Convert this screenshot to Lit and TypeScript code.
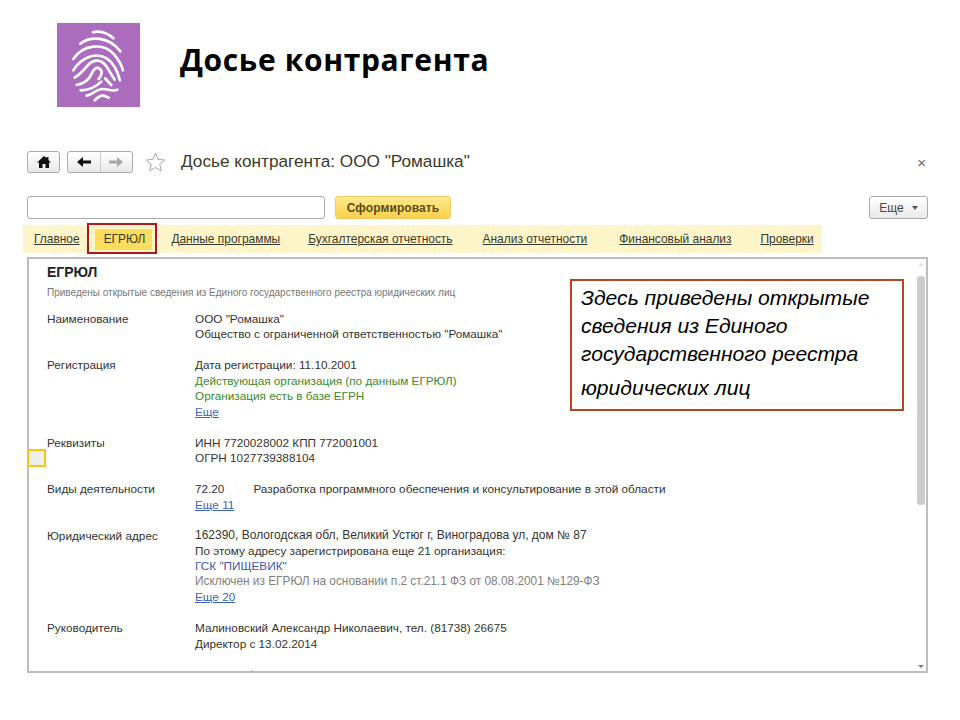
import { LitElement, html, css, svg } from 'lit';
import { customElement } from 'lit/decorators.js';

const fingerprint = svg`
  <g fill="none" stroke="#fff" stroke-width="8" stroke-linecap="round" stroke-linejoin="round">
    <path d="M159 66c20-6 44 2 61 18" />
    <path d="M121 100c30-24 86-22 120 23" />
    <path d="M100 146c30-44 90-50 122-14 14 16 22 30 27 48" />
    <path d="M100 180c24-38 66-56 100-36 22 14 32 36 40 66" />
    <path d="M104 202c18-10 30-26 42-40 16-16 36-14 50 2 12 16 16 26 28 44" />
    <path d="M110 224c22-4 36-12 44-32 6-16 16-24 26-16 10 8 2 24-4 30" />
    <path d="M122 240c24 0 46-10 62-26" />
    <path d="M196 204c6 8 12 14 18 20" />
    <path d="M140 256c18-2 28-20 48-20 18 0 26 8 44 2" />
    <path d="M164 270c8-8 16-14 24-14 8 0 12 4 18 6" />
  </g>
`;

interface Row {
  label: string;
  lines: { text: string; kind?: string }[];
}

const rows: Row[] = [
  {
    label: 'Наименование',
    lines: [{ text: 'ООО "Ромашка"' }, { text: 'Общество с ограниченной ответственностью "Ромашка"' }],
  },
  {
    label: 'Регистрация',
    lines: [
      { text: 'Дата регистрации: 11.10.2001' },
      { text: 'Действующая организация (по данным ЕГРЮЛ)', kind: 'green' },
      { text: 'Организация есть в базе ЕГРН', kind: 'green' },
      { text: 'Еще', kind: 'link' },
    ],
  },
  {
    label: 'Реквизиты',
    lines: [{ text: 'ИНН 7720028002 КПП 772001001' }, { text: 'ОГРН 1027739388104' }],
  },
  {
    label: 'Виды деятельности',
    lines: [
      { text: '72.20', kind: 'okved' },
      { text: 'Еще 11', kind: 'link' },
    ],
  },
  {
    label: 'Юридический адрес',
    lines: [
      { text: '162390, Вологодская обл, Великий Устюг г, Виноградова ул, дом № 87', kind: 'wide' },
      { text: 'По этому адресу зарегистрирована еще 21 организация:' },
      { text: 'ГСК "ПИЩЕВИК"', kind: 'blue' },
      { text: 'Исключен из ЕГРЮЛ на основании п.2 ст.21.1 ФЗ от 08.08.2001 №129-ФЗ', kind: 'grey' },
      { text: 'Еще 20', kind: 'link' },
    ],
  },
  {
    label: 'Руководитель',
    lines: [{ text: 'Малиновский Александр Николаевич, тел. (81738) 26675' }, { text: 'Директор с 13.02.2014' }],
  },
  {
    label: 'Уставный капитал',
    lines: [{ text: '15 000 руб.' }],
  },
];

const tabs = ['Главное', 'ЕГРЮЛ', 'Данные программы', 'Бухгалтерская отчетность', 'Анализ отчетности', 'Финансовый анализ', 'Проверки'];

@customElement('app-root')
export class AppRoot extends LitElement {
  static styles = css`
    :host {
      display: block;
      width: 960px;
      height: 720px;
      overflow: hidden;
      background: #fff;
      font-family: 'Liberation Sans', Arial, sans-serif;
      color: #333;
    }

    .page {
      padding-top: 23px;
    }

    .head {
      display: flex;
      align-items: center;
      gap: 40px;
      margin-left: 57px;
      height: 84px;
    }

    .logo {
      display: block;
      width: 83px;
      height: 84px;
    }

    h1 {
      margin: -12px 0 0;
      font-family: 'Open Sans', sans-serif;
      font-size: 30px;
      font-weight: 700;
      letter-spacing: 0.65px;
      color: #000;
    }

    .window {
      margin-top: 44px;
      padding: 0 32px 0 27px;
    }

    .toolbar {
      display: flex;
      align-items: center;
      height: 22px;
    }

    .btn {
      display: flex;
      align-items: center;
      justify-content: center;
      box-sizing: border-box;
      border: 1px solid #aaa;
      border-radius: 3px;
      background: linear-gradient(#fff, #e9e9e9);
    }

    .home {
      width: 33px;
      height: 22px;
    }

    .history {
      display: flex;
      width: 66px;
      height: 22px;
      margin-left: 7px;
      box-sizing: border-box;
      border: 1px solid #aaa;
      border-radius: 3px;
      background: linear-gradient(#fff, #e9e9e9);
    }

    .history span {
      display: flex;
      flex: 1;
      align-items: center;
      justify-content: center;
    }

    .history span + span {
      border-left: 1px solid #ccc;
    }

    .star {
      margin-left: 12px;
    }

    .doc-title {
      margin: -2px 0 0 15px;
      font-size: 17.2px;
      color: #3a3a2a;
    }

    .close {
      margin-left: auto;
      margin-right: 2px;
      font-size: 15px;
      color: #666;
    }

    .form {
      display: flex;
      gap: 10px;
      margin-top: 23px;
      height: 23px;
    }

    .search {
      box-sizing: border-box;
      width: 298px;
      border: 1px solid #aaa;
      border-radius: 3px;
      background: #fff;
    }

    .primary {
      width: 116px;
      box-sizing: border-box;
      border: 1px solid #eecb62;
      border-radius: 3px;
      background: linear-gradient(#ffe98f, #fbd04a);
      font-size: 12px;
      font-weight: 700;
      letter-spacing: 0.1px;
      color: #5a4c1c;
    }

    .more {
      gap: 8px;
      width: 59px;
      margin-left: auto;
      font-size: 12px;
      color: #444;
    }

    .caret {
      width: 0;
      height: 0;
      border: 3.5px solid transparent;
      border-top: 4px solid #555;
      border-bottom: 0;
    }

    .tabs {
      display: flex;
      align-items: center;
      box-sizing: border-box;
      width: 799px;
      height: 28px;
      margin: 6px 0 0 -4px;
      padding-left: 11px;
      background: #fdf4c9;
      font-size: 11.95px;
    }

    .tab {
      margin-right: 29px;
      color: #3a3a2a;
      text-decoration: underline;
      white-space: nowrap;
    }

    .tab:nth-child(3) {
      margin-right: 28px;
    }

    .tab:nth-child(4) {
      margin-right: 30px;
    }

    .tab:nth-child(5) {
      margin-right: 32px;
    }

    .tab.active {
      position: relative;
      margin: 0 26px 0 -5px;
      text-decoration: none;
      z-index: 0;
    }

    /* yellow fill and red frame sit behind / around the active tab label */
    .tab.active::before {
      content: '';
      position: absolute;
      inset: -3px -7px -4px -9px;
      z-index: -1;
      background: #fbdc5c;
    }

    .tab.active::after {
      content: '';
      position: absolute;
      inset: -9px -12px -8px -17px;
      border: 2px solid #a61c1c;
    }

    .panel-wrap {
      position: relative;
      margin-top: 4px;
    }

    .panel {
      position: relative;
      box-sizing: border-box;
      height: 416px;
      padding: 4px 0 0 18px;
      overflow: hidden;
      border: 2px solid #bdbdbd;
      font-size: 11.75px;
      line-height: 15.45px;
    }

    h2 {
      margin: 0;
      font-size: 14px;
      line-height: 18px;
      font-weight: 700;
      color: #222;
    }

    .sub {
      margin-top: 5px;
      font-size: 10px;
      line-height: 14px;
      color: #777;
    }

    .rows {
      display: flex;
      flex-direction: column;
      gap: 15.5px;
      margin-top: 11px;
    }

    .row {
      display: grid;
      grid-template-columns: 148px 1fr;
    }

    .line {
      white-space: nowrap;
    }

    .wide {
      font-size: 12px;
    }

    .green {
      color: #3a8a2e;
    }

    .link {
      color: #3c64b0;
      text-decoration: underline;
    }

    .blue {
      color: #3c5aa8;
    }

    .grey {
      font-size: 11.85px;
      color: #808080;
    }

    .okved {
      display: flex;
      gap: 29px;
    }

    .callout {
      position: absolute;
      left: 541px;
      top: 20px;
      box-sizing: border-box;
      width: 334px;
      height: 132px;
      padding: 3px 0 0 9px;
      border: 2px solid #b5451f;
      background: #fff;
      font-size: 21.1px;
      font-style: italic;
      line-height: 28px;
      white-space: nowrap;
      color: #000;
    }

    .callout .last {
      margin-top: 6px;
    }

    .marker {
      position: absolute;
      left: 0;
      top: 192px;
      box-sizing: border-box;
      width: 19px;
      height: 18px;
      border: 2px solid #f5c518;
      background: #eee;
    }

    .thumb {
      position: absolute;
      right: 1px;
      top: 17px;
      width: 8px;
      height: 229px;
      border-radius: 3px;
      background: #cbcbcb;
    }

    .arrow {
      position: absolute;
      right: 2px;
      width: 0;
      height: 0;
      border: 3px solid transparent;
    }

    .arrow.up {
      top: 4px;
      border-top: 0;
      border-bottom: 3px solid #ddd;
    }

    .arrow.down {
      bottom: 3px;
      border-bottom: 0;
      border-top: 3px solid #777;
    }
  `;

  renderLine(line: { text: string; kind?: string }) {
    if (line.kind === 'okved') {
      return html`<div class="line okved">
        <span>${line.text}</span><span>Разработка программного обеспечения и консультирование в этой области</span>
      </div>`;
    }
    return html`<div class="line ${line.kind ?? ''}">${line.text}</div>`;
  }

  render() {
    return html`
      <div class="page">
        <header class="head">
          <svg class="logo" viewBox="51 38 249 252">
            <rect x="51" y="38" width="249" height="252" fill="#ab6cbd" />
            ${fingerprint}
          </svg>
          <h1>Досье контрагента</h1>
        </header>

        <div class="window">
          <div class="toolbar">
            <div class="btn home">
              <svg width="14" height="12" viewBox="0 0 14 12">
                <path d="M7 0 0 6.5h2V12h3.5V8h3v4H12V6.5h2L11.5 4V1h-2v1z" fill="#111" />
              </svg>
            </div>
            <div class="history">
              <span>
                <svg width="14" height="10" viewBox="0 0 14 10">
                  <path d="M6 0 0 5l6 5V6.5h8v-3H6z" fill="#111" />
                </svg>
              </span>
              <span>
                <svg width="14" height="10" viewBox="0 0 14 10">
                  <path d="M8 0l6 5-6 5V6.5H0v-3h8z" fill="#a8a8a8" />
                </svg>
              </span>
            </div>
            <svg class="star" width="21" height="20" viewBox="0 0 21 20">
              <path d="M10.5 1.2l2.7 6.2 6.6.6-5 4.4 1.5 6.5-5.8-3.4-5.8 3.4 1.5-6.5-5-4.4 6.6-.6z" fill="none" stroke="#a5a5a5" />
            </svg>
            <span class="doc-title">Досье контрагента: ООО "Ромашка"</span>
            <span class="close">×</span>
          </div>

          <div class="form">
            <div class="search"></div>
            <button class="primary">Сформировать</button>
            <div class="btn more">Еще <i class="caret"></i></div>
          </div>

          <nav class="tabs">
            ${tabs.map((t) => html`<span class="tab ${t === 'ЕГРЮЛ' ? 'active' : ''}">${t}</span>`)}
          </nav>

          <div class="panel-wrap">
            <section class="panel">
              <h2>ЕГРЮЛ</h2>
              <div class="sub">Приведены открытые сведения из Единого государственного реестра юридических лиц</div>
              <div class="rows">
                ${rows.map(
                  (r) => html`
                    <div class="row">
                      <div>${r.label}</div>
                      <div>${r.lines.map((l) => this.renderLine(l))}</div>
                    </div>
                  `
                )}
              </div>
              <div class="callout">
                <div>Здесь приведены открытые</div>
                <div>сведения из Единого</div>
                <div>государственного реестра</div>
                <div class="last">юридических лиц</div>
              </div>
              <div class="arrow up"></div>
              <div class="thumb"></div>
              <div class="arrow down"></div>
            </section>
            <div class="marker"></div>
          </div>
        </div>
      </div>
    `;
  }
}
